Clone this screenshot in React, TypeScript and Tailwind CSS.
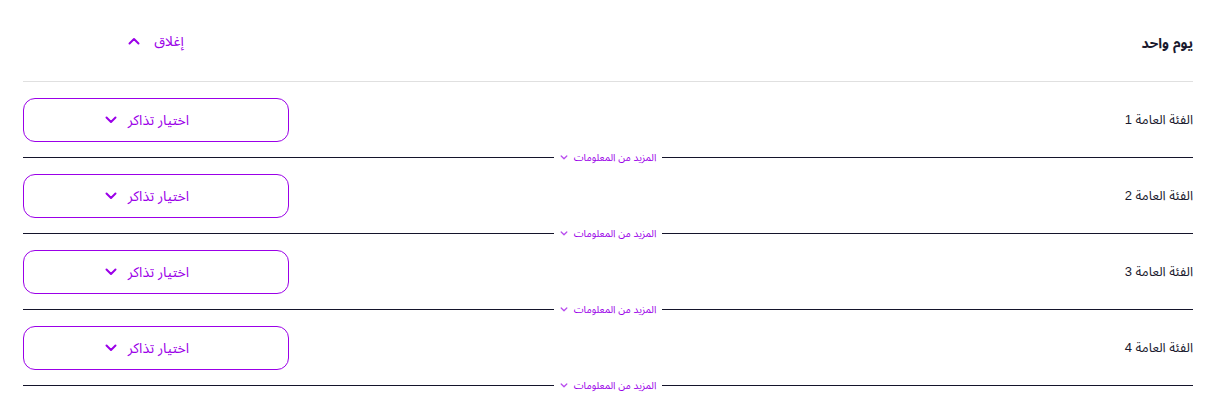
import React from "react";

function ChevronDown({ className }: { className?: string }) {
  return (
    <svg className={className} viewBox="0 0 12 8" fill="none" stroke="currentColor" strokeWidth={2} strokeLinecap="round" strokeLinejoin="round">
      <path d="M1.5 1.5 L6 6 L10.5 1.5" />
    </svg>
  );
}
function ChevronUp({ className }: { className?: string }) {
  return (
    <svg className={className} viewBox="0 0 12 8" fill="none" stroke="currentColor" strokeWidth={2} strokeLinecap="round" strokeLinejoin="round">
      <path d="M1.5 6.5 L6 2 L10.5 6.5" />
    </svg>
  );
}

function Row({ n }: { n: number }) {
  return (
    <div className="pt-4">
      <div className="flex items-center justify-between">
        <span className="text-[13px] leading-[20px] text-[#1a1a2e]">الفئة العامة {n}</span>
        <button className="w-[266px] h-[44px] rounded-[12px] border border-[#9b00e8] flex items-center justify-center gap-[11px] pr-[18px] text-[#9b00e8] text-[14px] leading-[20px] bg-white">
          <span>اختيار تذاكر</span>
          <ChevronDown className="w-[12px] h-[8px]" />
        </button>
      </div>
      <div className="flex items-center mt-[15px] h-[1px]">
        <div className="flex-1 h-px bg-[#14142b]" />
        <div className="flex items-center gap-[6px] px-[6px] text-[#9b00e8] text-[10px] leading-none">
          <span>المزيد من المعلومات</span>
          <ChevronDown className="w-[8px] h-[5px] opacity-70" />
        </div>
        <div className="flex-1 h-px bg-[#14142b]" />
      </div>
    </div>
  );
}

export default function App() {
  return (
    <div
      dir="rtl"
      className="bg-white w-[1206px] h-[406px] pr-[13px] pl-[23px]"
      style={{ fontFamily: '"Liberation Sans", "Noto Sans Arabic", sans-serif' }}
    >
      <div className="h-[82px] flex items-center justify-between border-b border-[#e0e0e0]">
        <span className="text-[14px] leading-[20px] font-bold text-[#1a1a2e] mt-[4px]">يوم واحد</span>
        <div className="w-[266px] flex justify-center">
          <button className="flex items-center gap-[14px] text-[#9b00e8] text-[14px] leading-[20px]">
            <span>إغلاق</span>
            <ChevronUp className="w-[12px] h-[8px]" />
          </button>
        </div>
      </div>
      {[1, 2, 3, 4].map((n) => (
        <Row key={n} n={n} />
      ))}
    </div>
  );
}
